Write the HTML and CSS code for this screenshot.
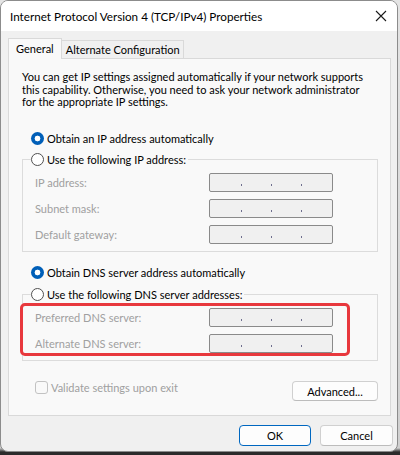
FILE: index.html
```html
<!DOCTYPE html>
<html>
<head>
<meta charset="utf-8">
<link rel="stylesheet" href="styles.css">
</head>
<body>
<div class="window">
  <div class="titlebar">
    <span class="title">Internet Protocol Version 4 (TCP/IPv4) Properties</span>
    <svg class="close" width="12" height="12" viewBox="0 0 12 12"><path d="M1 1 L11 11 M11 1 L1 11" stroke="#1a1a1a" stroke-width="1.1" fill="none"/></svg>
  </div>
  <div class="client">
    <div class="tabs">
      <div class="tab active">General</div>
      <div class="tab">Alternate Configuration</div>
    </div>
    <div class="panel">
      <p class="intro">You can get IP settings assigned automatically if your network supports this capability. Otherwise, you need to ask your network administrator for the appropriate IP settings.</p>
      <div class="radio-row"><span class="radio checked"></span><span>Obtain an IP address automatically</span></div>
      <fieldset class="group">
        <legend class="radio-row"><span class="radio"></span><span>Use the following IP address:</span></legend>
        <div class="field-row"><span class="lbl">IP address:</span><span class="ip"><i></i><i></i><i></i></span></div>
        <div class="field-row"><span class="lbl">Subnet mask:</span><span class="ip"><i></i><i></i><i></i></span></div>
        <div class="field-row"><span class="lbl">Default gateway:</span><span class="ip"><i></i><i></i><i></i></span></div>
      </fieldset>
      <div class="radio-row second"><span class="radio checked"></span><span>Obtain DNS server address automatically</span></div>
      <fieldset class="group dns">
        <legend class="radio-row"><span class="radio"></span><span>Use the following DNS server addresses:</span></legend>
        <div class="field-row"><span class="lbl">Preferred DNS server:</span><span class="ip"><i></i><i></i><i></i></span></div>
        <div class="field-row"><span class="lbl">Alternate DNS server:</span><span class="ip"><i></i><i></i><i></i></span></div>
        <div class="highlight"></div>
      </fieldset>
      <div class="bottom-row">
        <div class="check-row"><span class="checkbox"></span><span>Validate settings upon exit</span></div>
        <button class="btn advanced">Advanced...</button>
      </div>
    </div>
    <div class="buttons">
      <button class="btn default">OK</button>
      <button class="btn">Cancel</button>
    </div>
  </div>
</div>
</body>
</html>
```
FILE: styles.css
```css
* { box-sizing: border-box; }
html, body { margin: 0; padding: 0; }
body {
  width: 400px;
  height: 455px;
  background: linear-gradient(to bottom, #e4e4e4 0, #d0d0d0 448px, #2b2b2b 452px);
  font-family: "Lato", "Liberation Sans", sans-serif;
  font-size: 11px;
  color: #000;
  overflow: hidden;
}
.window {
  width: 398px;
  height: 452px;
  border: 1px solid #8c8c8c;
  border-radius: 8px;
  background: #f0f0f0;
  overflow: hidden;
  display: flex;
  flex-direction: column;
}
.titlebar {
  height: 30px;
  background: #fff;
  display: flex;
  align-items: center;
  justify-content: space-between;
  padding: 0 9px 0 9px;
  flex: none;
}
.title { font-size: 11.7px; color: #000; }
.close { margin-right: 1px; }
.client {
  flex: 1;
  padding: 7px 0 0 7px;
  display: flex;
  flex-direction: column;
}
.tabs { display: flex; align-items: flex-end; height: 20px; }
.tab {
  border: 1px solid #d9d9d9;
  border-bottom: none;
  background: #f0f0f0;
  height: 18px;
  padding: 0 3px 0 4px;
  line-height: 17px;
}
.tab.active {
  height: 21px;
  background: #f9f9f9;
  padding: 0 7px 0 7px;
  line-height: 19px;
  position: relative;
  margin-bottom: -1px;
  z-index: 1;
}
.tab + .tab { border-left: none; }
.panel {
  width: 383px;
  height: 358px;
  border: 1px solid #d9d9d9;
  background: #f9f9f9;
  padding: 12px 11px 0 13px;
  display: flex;
  flex-direction: column;
}
.intro { margin: 0; line-height: 12.7px; width: 352px; }
.radio-row { display: flex; align-items: center; gap: 3px; height: 16px; }
.panel > .radio-row { margin-top: 21px; margin-left: 9px; }
.panel > .radio-row.second { margin-top: 12px; }
.radio {
  width: 13px; height: 13px; border-radius: 50%;
  border: 1px solid #505050; background: #fff; flex: none;
}
.radio.checked {
  border: none;
  background: radial-gradient(circle, #fff 0 2.6px, #005fb8 3.2px);
}
.group {
  margin: 5px 0 0 0;
  padding: 6px 0 7px 12px;
  border: 1px solid #dcdcdc;
  width: 356px;
  min-width: 0;
  position: relative;
}
.group legend { padding: 0 2px 0 0; margin-left: -4px; }
.field-row { display: flex; align-items: center; justify-content: space-between; height: 19px; padding-right: 44px; }
.field-row + .field-row { margin-top: 7px; }
.lbl { color: #a0a0a0; }
.ip {
  width: 124px; height: 19px;
  border: 1px solid #8a8a8a; border-radius: 2px;
  background: #f0f0f0;
  display: flex; justify-content: center; gap: 29px; align-items: flex-end;
  padding-bottom: 5px;
}
.ip i { width: 1px; height: 2px; background: #6e6e8e; display: block; }
.dns { margin-top: 6px; }
.highlight {
  position: absolute;
  left: -3px; top: 1px;
  width: 330px; height: 53px;
  border: 3px solid #e8383d;
  border-radius: 5px;
}
.bottom-row { display: flex; justify-content: space-between; align-items: flex-start; margin-top: 18px; padding-left: 13px; padding-right: 1px; }
.check-row { display: flex; align-items: center; gap: 3px; color: #a0a0a0; height: 13px; margin-top: 2px; }
.checkbox { width: 13px; height: 13px; border: 1px solid #c2c2c2; border-radius: 3px; background: #f9f9f9; }
.btn {
  font-family: inherit; font-size: 11px; color: #000;
  background: #fdfdfd;
  border: 1px solid #d0d0d0; border-bottom-color: #bcbcbc;
  border-radius: 4px;
  height: 20px; padding: 0;
}
.advanced { width: 86px; margin-top: 2px; }
.buttons { display: flex; justify-content: flex-end; gap: 9px; margin-top: 9px; padding-right: 4px; }
.buttons .btn { height: 21px; width: 73px; }
.buttons .default { width: 72px; border: 1px solid #0067c0; }
```
